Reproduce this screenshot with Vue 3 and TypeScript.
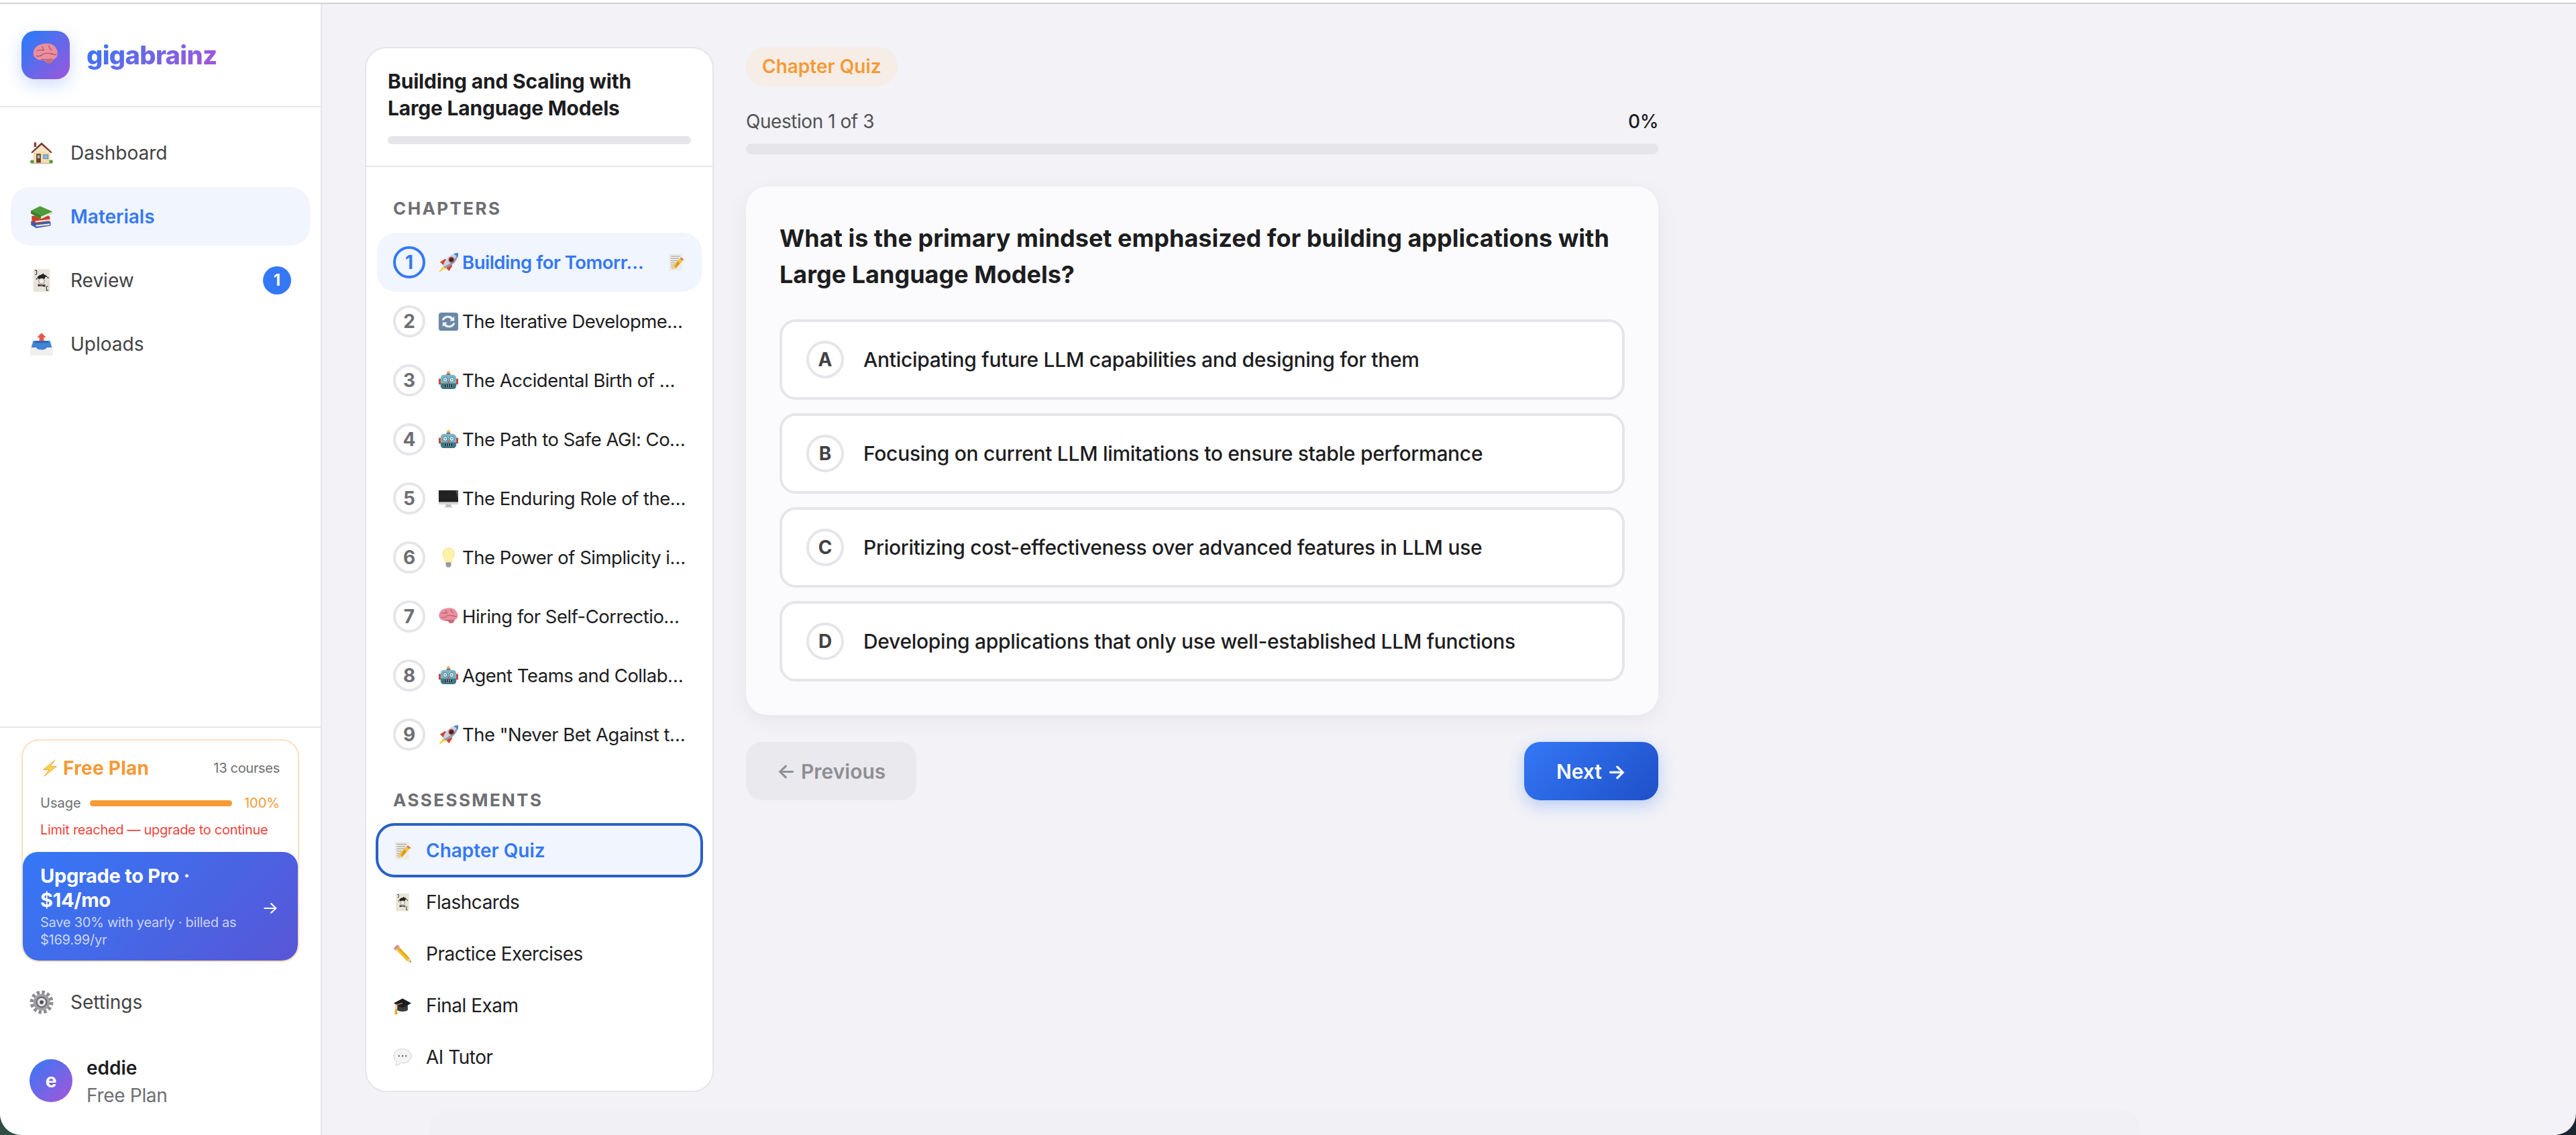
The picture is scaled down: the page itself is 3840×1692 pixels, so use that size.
<script setup lang="ts">
const nav = [
  { icon: 'house', label: 'Dashboard' },
  { icon: 'books', label: 'Materials', active: true },
  { icon: 'joker', label: 'Review', badge: '1' },
  { icon: 'tray', label: 'Uploads' },
]
const chapters = [
  { icon: 'rocket', label: 'Building for Tomorr…', active: true },
  { icon: 'refresh', label: 'The Iterative Developme…' },
  { icon: 'robot', label: 'The Accidental Birth of …' },
  { icon: 'robot', label: 'The Path to Safe AGI: Co…' },
  { icon: 'monitor', label: 'The Enduring Role of the…' },
  { icon: 'bulb', label: 'The Power of Simplicity i…' },
  { icon: 'brain', label: 'Hiring for Self-Correctio…' },
  { icon: 'robot', label: 'Agent Teams and Collab…' },
  { icon: 'rocket', label: 'The "Never Bet Against t…' },
]
const assessments = [
  { icon: 'memo', label: 'Chapter Quiz', active: true },
  { icon: 'joker', label: 'Flashcards' },
  { icon: 'pencil', label: 'Practice Exercises' },
  { icon: 'cap', label: 'Final Exam' },
  { icon: 'speech', label: 'AI Tutor' },
]
const options = [
  { key: 'A', text: 'Anticipating future LLM capabilities and designing for them' },
  { key: 'B', text: 'Focusing on current LLM limitations to ensure stable performance' },
  { key: 'C', text: 'Prioritizing cost-effectiveness over advanced features in LLM use' },
  { key: 'D', text: 'Developing applications that only use well-established LLM functions' },
]
</script>

<template>
  <div class="screen">
    <svg class="defs" width="0" height="0" aria-hidden="true">
      <defs>
        <symbol id="e-brain" viewBox="0 0 32 32">
          <path d="M1.500 16c-1-7 4-12 10-13 7-2 16 0 18 7 2 5 0 10-4 11-1 4-6 5-8 3-2 0-3-1-4-2-5 1-11-2-12-6z" fill="#e98fa0"/>
          <path d="M16 24c2 3 7 3 9-1l-1-3-7 1z" fill="#c96f80"/>
          <path d="M6 11c3-2 5 0 8-1M5 17c3 1 6 0 8-2 4-2 8-1 11 0M12 6c1 2 0 3 2 4M20 5c-1 2 1 3 3 5M11 21c3 1 7 0 9 1M24 14c1 2 3 2 5 1" fill="none" stroke="#b9576c" stroke-width="1.100" stroke-linecap="round"/>
        </symbol>
        <symbol id="e-house" viewBox="0 0 32 32">
          <path d="M6 2h3v6H6z" fill="#8f3f34"/>
          <path d="M5 14h22v15H5z" fill="#f2dcb0"/>
          <path d="M16 2 2 15l1.500 1.500L16 5.500l12.500 11L30 15z" fill="#7a3a33"/>
          <path d="M16 5.500 5 15h22z" fill="#f6e4bf"/>
          <path d="M9 17h6v12H9z" fill="#6e4030"/>
          <path d="M10.500 19h3v4h-3z" fill="#a7c3dc"/>
          <path d="M18 18h7v6h-7z" fill="#6e8aa6"/>
          <path d="M19 19h5v4h-5z" fill="#8cbbe6"/>
          <circle cx="3.500" cy="27.500" r="2.500" fill="#5b9a3c"/>
          <circle cx="28.500" cy="27.500" r="2.500" fill="#5b9a3c"/>
          <path d="M4 29h24v1.500H4z" fill="#c2b59a"/>
        </symbol>
        <symbol id="e-books" viewBox="0 0 32 32">
          <path d="M2 22 21 20l7 3v5L9 31l-7-4z" fill="#3a5bb0"/>
          <path d="M8 27l19-2v2L9 29z" fill="#e8e6e0"/>
          <path d="M3 15l19-2 5 3v6L8 25l-5-4z" fill="#c8402c"/>
          <path d="M8 21.500l19-2v2L8 23.500z" fill="#efe9dd"/>
          <path d="M2 8 14 2l16 7v3L15 19 2 12z" fill="#4f9b3c"/>
          <path d="M15 16l15-6.500v2.500L15 19z" fill="#ece8d8"/>
          <path d="M2 8l13 6v4L2 12z" fill="#3c7f2d"/>
        </symbol>
        <symbol id="e-joker" viewBox="0 0 32 32">
          <rect x="5" y="1" width="22" height="30" rx="1.500" fill="#e9e4d8"/>
          <path d="M10 13c1-3 4-5 8-5 3 0 5 2 6 4l-3-1-1 3h-8l-1-1z" fill="#222"/>
          <circle cx="9.500" cy="14" r=".9" fill="#222"/><circle cx="24.500" cy="12.500" r=".9" fill="#222"/><circle cx="18" cy="7.500" r=".9" fill="#222"/>
          <circle cx="16" cy="17" r="3.800" fill="#f2eee6" stroke="#444" stroke-width="0.600"/>
          <path d="M11 23.500l10-1.500M11 21.500l10 2.500" stroke="#222" stroke-width="1.200"/>
          <circle cx="16" cy="22.500" r="1.200" fill="#c0505a"/>
          <path d="M7 3h2.500v4c0 1.500-1.500 1.500-2 1" fill="none" stroke="#333" stroke-width="1"/>
          <path d="M25 29h-2.500v-4c0-1.500 1.500-1.500 2-1" fill="none" stroke="#333" stroke-width="1"/>
        </symbol>
        <symbol id="e-tray" viewBox="0 0 32 32">
          <path d="M16 1l6 6h-3v6h-6V7h-3z" fill="#e9564a"/>
          <path d="M3 13h26l2 8v9a1 1 0 0 1-1 1H2a1 1 0 0 1-1-1v-9z" fill="#f0efed"/>
          <path d="M5 11.500h22l2.500 9H23c-1 4-13 4-14 0H2.500z" fill="#3f84d6"/>
          <path d="M8 11.500h16l1 3H7z" fill="#2f68b4"/>
        </symbol>
        <symbol id="e-bolt" viewBox="0 0 32 32">
          <path d="M26 1 4 19h11L6 31l23-18H17z" fill="#fbd24c" stroke="#f09a30" stroke-width="1"/>
        </symbol>
        <symbol id="e-gear" viewBox="0 0 32 32">
          <circle cx="16" cy="16" r="12" fill="none" stroke="#8a8a8e" stroke-width="7" stroke-dasharray="3.500 2.780"/>
          <circle cx="16" cy="16" r="11" fill="#a0a0a4"/>
          <circle cx="16" cy="16" r="7.500" fill="#6b6b70"/>
          <circle cx="16" cy="16" r="5.500" fill="#e6e6e8"/>
          <circle cx="16" cy="16" r="2.500" fill="#4c4c50"/>
        </symbol>
        <symbol id="e-rocket" viewBox="0 0 32 32">
          <path d="M3 15l8-5 11 11-5 8z" fill="#d8402f"/>
          <path d="M10 19 1 31l13-7z" fill="#f7b928"/>
          <path d="M9 23 4 29l7-3z" fill="#fbe56c"/>
          <path d="M8 20C11 9 20 2 31 1c0 11-8 20-20 23z" fill="#c9d3e0"/>
          <path d="M31 1c0 11-8 20-20 23l-2-2C20 18 27 10 31 1z" fill="#8d9db4"/>
          <path d="M24 2 31 1l-.500 7z" fill="#3c86d6"/>
          <circle cx="20.500" cy="11.500" r="3.800" fill="#2a2f3a" stroke="#d8402f" stroke-width="1.400"/>
        </symbol>
        <symbol id="e-memo" viewBox="0 0 32 32">
          <rect x="3" y="1" width="24" height="30" fill="#ecebe6"/>
          <path d="M6 5h17M6 9h15M6 13h17M6 17h9M6 21h7M6 25h9" stroke="#8a8a86" stroke-width="1"/>
          <path d="M25 7l5 4-15 16-7 2 2-7z" fill="#f2c23a"/>
          <path d="M25 7l5 4-2 2-5-4z" fill="#e66a6a"/>
          <path d="M10 22l5 5-7 2z" fill="#e9cfa8"/>
          <path d="M18 14l5 4-8 9-1-3z" fill="#d89a20"/>
        </symbol>
        <symbol id="e-refresh" viewBox="0 0 32 32">
          <rect x="1" y="2" width="30" height="28" rx="4" fill="#6b88a8"/>
          <path d="M6 14c1-5 5-7 10-7 3 0 5 1 7 3l2-2v7h-7l2-2c-1-2-3-3-5-3-3 0-5 2-6 4z" fill="#f1f4f7"/>
          <path d="M26 18c-1 5-5 7-10 7-3 0-5-1-7-3l-2 2v-7h7l-2 2c1 2 3 3 5 3 3 0 5-2 6-4z" fill="#f1f4f7"/>
        </symbol>
        <symbol id="e-robot" viewBox="0 0 32 32">
          <rect x="1" y="13" width="3.500" height="9" rx="1" fill="#c8453a"/>
          <rect x="27.500" y="13" width="3.500" height="9" rx="1" fill="#c8453a"/>
          <circle cx="16" cy="3.500" r="2.500" fill="#f1b73a"/>
          <rect x="13" y="5" width="6" height="3" rx="1" fill="#6a5aa8"/>
          <rect x="4" y="7" width="24" height="22" rx="5" fill="#7eb6c2"/>
          <path d="M4 20h24v4a5 5 0 0 1-5 5H9a5 5 0 0 1-5-5z" fill="#3f7686"/>
          <circle cx="11" cy="14.500" r="3.500" fill="#eaf6fa" stroke="#3a6f80" stroke-width="1"/>
          <circle cx="21" cy="14.500" r="3.500" fill="#eaf6fa" stroke="#3a6f80" stroke-width="1"/>
          <circle cx="11" cy="14.500" r="1.300" fill="#3e93c9"/>
          <circle cx="21" cy="14.500" r="1.300" fill="#3e93c9"/>
          <path d="M16 16l2 3.500h-4z" fill="#d8503f"/>
          <rect x="10.500" y="22" width="11" height="3.500" rx="1" fill="#25343c"/>
          <path d="M13 22v3.500M16 22v3.500M19 22v3.500" stroke="#dde" stroke-width="0.800"/>
        </symbol>
        <symbol id="e-monitor" viewBox="0 0 32 32">
          <rect x="1" y="3" width="30" height="20" fill="#222"/>
          <path d="M18 3h9l4 14V3z" fill="#555"/>
          <rect x="1" y="21" width="30" height="4" fill="#d6d6d8"/>
          <path d="M12 25h8v3h-8z" fill="#b5b5b8"/>
          <path d="M10 28h12v1.500H10z" fill="#c8c8ca"/>
        </symbol>
        <symbol id="e-bulb" viewBox="0 0 32 32">
          <path d="M16 1c-6 0-9 5-9 9 0 5 4 7 5 13h8c1-6 5-8 5-13 0-4-3-9-9-9z" fill="#fdf3a8" stroke="#e6d98a" stroke-width="0.800"/>
          <path d="M12 23h8v5l-2 3h-4l-2-3z" fill="#a8a8a8"/>
          <path d="M12 25h8M12 27.500h8" stroke="#777" stroke-width="0.800"/>
        </symbol>
        <symbol id="e-pencil" viewBox="0 0 32 32">
          <path d="M4 8l5-5 19 20 3 8-8-3z" fill="#f4c22f"/>
          <path d="M9 3l19 20-2.500 2.500L6.500 5.500z" fill="#e8a81e"/>
          <path d="M1.500 6 6 1.500c1-1 2-1 3 0l1.500 1.500L4 9.500 2 8c-1-1-1-1-.5-2z" fill="#e77f8c"/>
          <path d="M3 9l7-7 1.500 1.500-7 7z" fill="#b8b8b8"/>
          <path d="M23 28l5-5 3 8z" fill="#e9cfa8"/>
          <path d="M28.500 29l1-1 1.500 3z" fill="#333"/>
        </symbol>
        <symbol id="e-cap" viewBox="0 0 32 32">
          <path d="M7 14v10c4 3 14 3 18 0V14z" fill="#3a3a3c"/>
          <path d="M16 4 1 12l15 8 15-8z" fill="#1c1c1e"/>
          <path d="M16 12 5 15v8" fill="none" stroke="#e6a63c" stroke-width="1.400"/>
          <path d="M3.500 22h3l1 9h-5z" fill="#e6a63c"/>
        </symbol>
        <symbol id="e-speech" viewBox="0 0 32 32">
          <path d="M16 2C8 2 1 6.500 1 14c0 4 2 7 5 9 0 3-1 6-2 7 4 0 7-2 9-4.500 1 .2 2 .5 3 .5 8 0 15-5 15-12S24 2 16 2z" fill="#f4f4f6" stroke="#c8c8cc" stroke-width="1"/>
          <circle cx="10" cy="14" r="1.300" fill="#555"/><circle cx="16" cy="14" r="1.300" fill="#555"/><circle cx="22" cy="14" r="1.300" fill="#555"/>
        </symbol>
      </defs>
    </svg>

    <div class="window">
      <aside class="sidebar">
        <div class="brand">
          <div class="logo"><svg class="logo-icon"><use href="#e-brain" /></svg></div>
          <span class="brand-name">gigabrainz</span>
        </div>
        <nav class="nav">
          <a v-for="item in nav" :key="item.label" class="nav-item" :class="{ active: item.active }">
            <svg class="nav-icon"><use :href="'#e-' + item.icon" /></svg>
            <span class="nav-label">{{ item.label }}</span>
            <span v-if="item.badge" class="badge">{{ item.badge }}</span>
          </a>
        </nav>
        <div class="foot">
          <div class="plan">
            <div class="plan-head">
              <span class="plan-name"><svg class="bolt"><use href="#e-bolt" /></svg>Free Plan</span>
              <span class="plan-count">13 courses</span>
            </div>
            <div class="usage">
              <span class="usage-label">Usage</span>
              <span class="usage-bar"></span>
              <span class="usage-pct">100%</span>
            </div>
            <div class="limit">Limit reached — upgrade to continue</div>
            <div class="upgrade">
              <div class="upgrade-text">
                <div class="upgrade-title">Upgrade to Pro · $14/mo</div>
                <div class="upgrade-sub">Save 30% with yearly · billed as $169.99/yr</div>
              </div>
              <span class="upgrade-arrow">→</span>
            </div>
          </div>
          <a class="nav-item settings">
            <svg class="nav-icon"><use href="#e-gear" /></svg>
            <span class="nav-label">Settings</span>
          </a>
          <div class="user">
            <div class="avatar">e</div>
            <div class="user-text">
              <div class="user-name">eddie</div>
              <div class="user-plan">Free Plan</div>
            </div>
          </div>
        </div>
      </aside>

      <main class="main">
        <section class="panel">
          <header class="panel-head">
            <h2 class="course">Building and Scaling with Large Language Models</h2>
            <div class="course-bar"></div>
          </header>
          <div class="panel-body">
            <div class="section-label">CHAPTERS</div>
            <div v-for="(ch, i) in chapters" :key="i" class="chapter" :class="{ active: ch.active }">
              <span class="num">{{ i + 1 }}</span>
              <span class="chapter-text"><svg class="ch-icon"><use :href="'#e-' + ch.icon" /></svg>{{ ch.label }}</span>
              <svg v-if="ch.active" class="ch-memo"><use href="#e-memo" /></svg>
            </div>
            <div class="section-label second">ASSESSMENTS</div>
            <div v-for="a in assessments" :key="a.label" class="assess" :class="{ active: a.active }">
              <svg class="as-icon"><use :href="'#e-' + a.icon" /></svg>
              <span>{{ a.label }}</span>
            </div>
          </div>
        </section>

        <section class="quiz">
          <span class="chip">Chapter Quiz</span>
          <div class="progress-row">
            <span class="q-count">Question 1 of 3</span>
            <span class="q-pct">0%</span>
          </div>
          <div class="q-bar"></div>
          <div class="card">
            <h1 class="question">What is the primary mindset emphasized for building applications with Large Language Models?</h1>
            <div class="options">
              <div v-for="o in options" :key="o.key" class="option">
                <span class="letter">{{ o.key }}</span>
                <span class="option-text">{{ o.text }}</span>
              </div>
            </div>
          </div>
          <div class="actions">
            <button class="btn prev">← Previous</button>
            <button class="btn next">Next →</button>
          </div>
        </section>
      </main>
      <div class="blob"></div>
    </div>
  </div>
</template>

<style>
html, body { margin: 0; background: #1d2b2c; }
</style>

<style scoped>
.screen {
  width: 3840px; height: 1692px; overflow: hidden; box-sizing: border-box;
  padding-top: 4px;
  background:
    linear-gradient(#fff 4px, transparent 4px),
    linear-gradient(90deg, #2f4f45, #1b2530);
  font-family: Inter, "Liberation Sans", sans-serif;
  color: #1d1d1f;
}
.defs { position: absolute; }
.window {
  position: relative;
  width: 3840px; height: 1688px; box-sizing: border-box;
  display: flex; overflow: hidden;
  background: #f2f2f7;
  border-top: 2px solid #d1d1d6;
  border-radius: 0 0 32px 32px;
}

/* sidebar */
.sidebar {
  width: 480px; flex: none; box-sizing: border-box;
  display: flex; flex-direction: column;
  background: #fff; border-right: 2px solid #e5e5ea;
}
.brand {
  height: 154px; box-sizing: border-box; flex: none;
  display: flex; align-items: center; gap: 25px;
  padding-left: 32px;
  border-bottom: 2px solid #e5e5ea;
}
.logo {
  width: 72px; height: 72px; border-radius: 20px; flex: none;
  display: flex; align-items: center; justify-content: center;
  background: linear-gradient(135deg, #3478f6 15%, #9f55da 100%);
  box-shadow: 0 8px 24px rgba(52, 120, 246, .25);
}
.logo-icon { width: 40px; height: 40px; }
.brand-name {
  font-size: 38px; font-weight: 800; letter-spacing: -.6px;
  background: linear-gradient(135deg, #3478f6, #a855d8);
  -webkit-background-clip: text; background-clip: text; color: transparent;
}
.nav { display: flex; flex-direction: column; gap: 8px; padding: 24px 16px; }
.nav-item {
  height: 87px; box-sizing: border-box;
  display: flex; align-items: center; gap: 25px;
  padding: 0 28px; border-radius: 28px;
  color: #424245; font-size: 28px; font-weight: 400;
}
.nav-item.active { background: #f0f5fe; color: #3478f6; font-weight: 600; }
.nav-icon { width: 36px; height: 36px; flex: none; }
.nav-label { flex: 1; }
.badge {
  width: 42px; height: 42px; border-radius: 50%; flex: none;
  display: flex; align-items: center; justify-content: center;
  background: #3478f6; color: #fff; font-size: 24px; font-weight: 700;
}
.foot {
  margin-top: auto; border-top: 2px solid #e5e5ea;
  padding-top: 17px; padding-bottom: 48px;
  display: flex; flex-direction: column;
}
.plan {
  margin: 0 32px; box-sizing: border-box; height: 332px;
  border: 2px solid #fbdfc0; border-radius: 26px; overflow: hidden;
  display: flex; flex-direction: column;
}
.plan-head {
  display: flex; justify-content: space-between; align-items: center;
  padding: 24px 27px 0 26px; height: 34px; box-sizing: content-box;
}
.plan-name {
  display: flex; align-items: center; gap: 7px;
  color: #f59a35; font-size: 28px; font-weight: 700; letter-spacing: .25px;
}
.bolt { width: 26px; height: 26px; margin-left: 1px; }
.plan-count { color: #6e6e73; font-size: 20px; letter-spacing: -.3px; }
.usage {
  display: flex; align-items: center; height: 28px;
  padding: 0 27px 0 26px; margin-top: 21px;
  font-size: 20px;
}
.usage-label { color: #6e6e73; width: 74px; }
.usage-bar { flex: 1; height: 9px; border-radius: 5px; background: #f59a35; }
.usage-pct { color: #f59a35; width: 71px; text-align: right; }
.limit {
  margin-top: 12px; padding-left: 26px; height: 28px; line-height: 28px;
  font-size: 20px; letter-spacing: -.3px; color: #f04438; white-space: nowrap;
}
.upgrade {
  margin-top: 19px; flex: 1; box-sizing: border-box;
  display: flex; align-items: center; justify-content: space-between;
  padding: 18px 29px 18px 26px;
  background: linear-gradient(135deg, #3478f6, #5856d6);
  border-radius: 22px; color: #fff;
}
.upgrade-text { width: 314px; }
.upgrade-title { font-size: 29px; font-weight: 700; line-height: 36px; letter-spacing: -.3px; }
.upgrade-sub { font-size: 20px; letter-spacing: -.25px; line-height: 26px; margin-top: 2px; color: rgba(255, 255, 255, .72); }
.upgrade-arrow { font-size: 26px; line-height: 36px; margin-top: 4px; }
.settings { margin: 16px 16px 0; }
.user { display: flex; align-items: center; gap: 21px; padding-left: 44px; margin-top: 41px; }
.avatar {
  width: 64px; height: 64px; border-radius: 50%; flex: none;
  display: flex; align-items: center; justify-content: center;
  background: linear-gradient(135deg, #3478f6, #a855d8);
  color: #fff; font-size: 28px; font-weight: 700;
}
.user-name { font-size: 28px; font-weight: 600; line-height: 40px; color: #1d1d1f; margin-top: -6px; }
.user-plan { font-size: 28px; line-height: 42px; color: #6e6e73; margin-bottom: -10px; letter-spacing: -.3px; }

/* course panel */
.main { flex: 1; display: flex; gap: 48px; padding: 64px; box-sizing: border-box; min-width: 0; }
.panel {
  width: 520px; flex: none; box-sizing: border-box;
  background: #fff; border: 2px solid #e5e5ea; border-radius: 32px;
  display: flex; flex-direction: column; overflow: hidden;
}
.panel-head { padding: 29px 32px 32px; border-bottom: 2px solid #e5e5ea; height: 177px; box-sizing: border-box; }
.course { margin: 0; max-width: 400px; font-size: 30px; line-height: 40px; font-weight: 700; letter-spacing: -.2px; color: #1d1d1f; }
.course-bar { height: 12px; margin-top: 22px; border-radius: 6px; background: #e5e5ea; }
.panel-body { padding: 45px 16px 0; }
.section-label {
  padding-left: 24px; height: 32px; line-height: 33px; margin-bottom: 21px;
  font-size: 26px; font-weight: 700; letter-spacing: 2.400px; color: #6e6e73;
}
.section-label.second { margin-top: 37px; }
.chapter {
  height: 88px; display: flex; align-items: center; gap: 20px;
  padding: 0 24px; border-radius: 28px; font-size: 27.500px; letter-spacing: -.5px; white-space: nowrap;
}
.chapter.active { background: #f0f5fe; color: #3478f6; font-weight: 600; }
.num {
  width: 48px; height: 48px; box-sizing: border-box; flex: none; border-radius: 50%;
  border: 4px solid #e5e5ea; color: #6e6e73;
  display: flex; align-items: center; justify-content: center;
  font-size: 28px; font-weight: 700; letter-spacing: 0;
}
.chapter.active .num { border-color: #3478f6; color: #3478f6; }
.chapter-text { flex: 1; min-width: 0; display: flex; align-items: center; }
.ch-icon { width: 31px; height: 31px; flex: none; margin: 0 5px 0 -1px; }
.ch-memo { width: 26px; height: 28px; flex: none; margin-right: 1px; }
.assess {
  height: 77px; display: flex; align-items: center; gap: 21px;
  padding: 0 24px; border-radius: 26px; font-size: 28px; letter-spacing: -.5px;
}
.assess.active {
  background: #f0f5fe; color: #3478f6; font-weight: 600; letter-spacing: 0;
  outline: 4px solid #2860c8; outline-offset: -2px;
}
.as-icon { width: 28px; height: 28px; flex: none; }

/* quiz */
.quiz { width: 1360px; flex: none; display: flex; flex-direction: column; }
.chip {
  align-self: flex-start; height: 58px; padding: 0 24px; border-radius: 29px;
  display: flex; align-items: center;
  background: #f5ede6; color: #f59a35; font-size: 28px; font-weight: 600;
}
.progress-row {
  display: flex; justify-content: space-between; align-items: center;
  height: 40px; margin-top: 33px; font-size: 28px;
}
.q-count { color: #515154; letter-spacing: -.45px; }
.q-pct { color: #1d1d1f; font-weight: 500; letter-spacing: -.5px; }
.q-bar { height: 16px; margin-top: 13px; border-radius: 8px; background: #e5e5ea; }
.card {
  margin-top: 48px; padding: 50px; height: 788px; box-sizing: border-box;
  background: #fbfbfd; border-radius: 32px;
  box-shadow: 0 8px 32px rgba(0, 0, 0, .06);
}
.question { margin: 0 0 40px; font-size: 36px; line-height: 54px; font-weight: 700; color: #1d1d1f; }
.options { display: flex; flex-direction: column; gap: 20px; }
.option {
  height: 120px; box-sizing: border-box; display: flex; align-items: center; gap: 29px;
  padding: 0 36px; background: #fff; border: 4px solid #e5e5ea; border-radius: 24px;
}
.letter {
  width: 56px; height: 56px; box-sizing: border-box; flex: none; border-radius: 50%;
  border: 4px solid #e5e5ea; color: #424245;
  display: flex; align-items: center; justify-content: center;
  font-size: 28px; font-weight: 700;
}
.option-text { font-size: 30px; font-weight: 500; letter-spacing: -.3px; color: #1d1d1f; }
.actions { display: flex; justify-content: space-between; margin-top: 40px; }
.btn {
  height: 87px; border: 0; border-radius: 24px; font-family: inherit; font-size: 30px; font-weight: 600;
}
.prev { width: 254px; background: #e9e9ee; color: #8e8e93; }
.next {
  width: 200px; color: #fff;
  background: linear-gradient(135deg, #3478f6, #1f4fc8);
  box-shadow: 0 8px 24px rgba(52, 120, 246, .3);
}
.blob {
  position: absolute; left: 640px; width: 2550px; top: 1647px; height: 60px;
  background: rgba(0, 0, 0, .006); border-radius: 30px 30px 0 0;
}
</style>
